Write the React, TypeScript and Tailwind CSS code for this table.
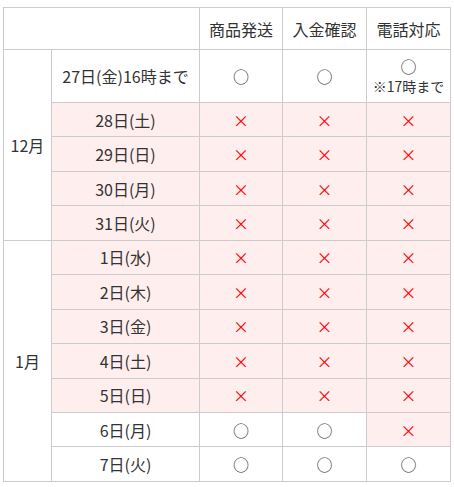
import React from "react";

type Mark = "o" | "x";

interface Row {
  date: string;
  ship: Mark;
  pay: Mark;
  tel: Mark;
  note?: string;
}

const dec: Row[] = [
  { date: "27日(金)16時まで", ship: "o", pay: "o", tel: "o", note: "※17時まで" },
  { date: "28日(土)", ship: "x", pay: "x", tel: "x" },
  { date: "29日(日)", ship: "x", pay: "x", tel: "x" },
  { date: "30日(月)", ship: "x", pay: "x", tel: "x" },
  { date: "31日(火)", ship: "x", pay: "x", tel: "x" },
];

const jan: Row[] = [
  { date: "1日(水)", ship: "x", pay: "x", tel: "x" },
  { date: "2日(木)", ship: "x", pay: "x", tel: "x" },
  { date: "3日(金)", ship: "x", pay: "x", tel: "x" },
  { date: "4日(土)", ship: "x", pay: "x", tel: "x" },
  { date: "5日(日)", ship: "x", pay: "x", tel: "x" },
  { date: "6日(月)", ship: "o", pay: "o", tel: "x" },
  { date: "7日(火)", ship: "o", pay: "o", tel: "o" },
];

const cell = "border border-[#cccccc] text-center align-middle p-0";

const MarkCell = ({ mark, note }: { mark: Mark; note?: string }) => (
  <td className={`${cell} ${mark === "x" ? "bg-[#ffeeee]" : "bg-white"}`}>
    {mark === "x" ? (
      <span className="text-[#ff0000]">×</span>
    ) : (
      <div className="flex flex-col items-center">
        <span className="leading-[20px]">○</span>
        {note && <span className="text-[14px] leading-[20px]">{note}</span>}
      </div>
    )}
  </td>
);

const MonthRows = ({ label, rows }: { label: string; rows: Row[] }) => (
  <>
    {rows.map((r, i) => {
      const allX = r.ship === "x" && r.pay === "x" && r.tel === "x";
      return (
        <tr key={r.date} className={r.note ? "h-[53px]" : "h-[34.45px]"}>
          {i === 0 && (
            <td rowSpan={rows.length} className={`${cell} bg-white`}>
              {label}
            </td>
          )}
          <td className={`${cell} ${allX ? "bg-[#ffeeee]" : "bg-white"}`}>{r.date}</td>
          <MarkCell mark={r.ship} />
          <MarkCell mark={r.pay} />
          <MarkCell mark={r.tel} note={r.note} />
        </tr>
      );
    })}
  </>
);

export default function App() {
  return (
    <div
      className="bg-white w-[454px] h-[487px] pt-[7px] pl-[3px] text-[#333333] text-[16px]"
      style={{ fontFamily: '"Noto Sans CJK JP", "Noto Sans", sans-serif' }}
    >
      <table className="border-collapse table-fixed w-[448px]">
        <colgroup>
          <col className="w-[48px]" />
          <col className="w-[148px]" />
          <col className="w-[83px]" />
          <col className="w-[84px]" />
          <col className="w-[84px]" />
        </colgroup>
        <thead>
          <tr className="h-[42px]">
            <th colSpan={2} className={`${cell} font-normal`}></th>
            <th className={`${cell} font-normal`}>商品発送</th>
            <th className={`${cell} font-normal`}>入金確認</th>
            <th className={`${cell} font-normal`}>電話対応</th>
          </tr>
        </thead>
        <tbody>
          <MonthRows label="12月" rows={dec} />
          <MonthRows label="1月" rows={jan} />
        </tbody>
      </table>
    </div>
  );
}
